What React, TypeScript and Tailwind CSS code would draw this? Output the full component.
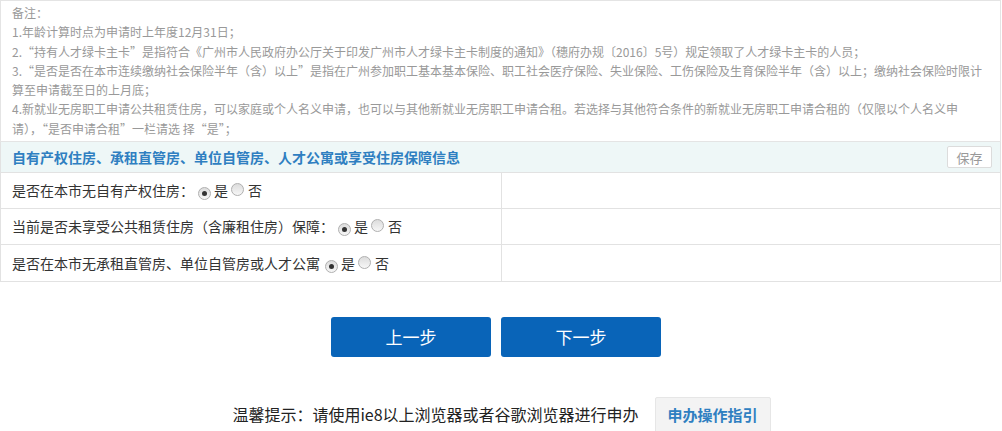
import React from "react";

const FONT = { fontFamily: '"Noto Sans CJK SC", "Noto Sans", sans-serif' };

function Radio({ checked }: { checked?: boolean }) {
  return (
    <span className="inline-flex w-[13px] h-[13px] rounded-full border border-[#b0b0b0] bg-gradient-to-b from-[#dcdcdc] to-[#f7f7f7] items-center justify-center shrink-0">
      {checked ? <span className="w-[5px] h-[5px] rounded-full bg-[#333]" /> : null}
    </span>
  );
}

function Row({ label, last, gap }: { label: string; last?: boolean; gap?: boolean }) {
  return (
    <div className={"grid grid-cols-[501px_1fr] h-[36px] " + (last ? "" : "border-b border-[#e2e2e2]")}>
      <div className="border-r border-[#e2e2e2] flex items-center pl-[11px] text-[14px] text-[#333]">
        <span>{label}</span>
        <span className={gap ? "ml-[5px] mr-[3px]" : "ml-[4px] mr-[3px]"}>
          <Radio checked />
        </span>
        <span>是</span>
        <span className="ml-[3px] mr-[4px]">
          <Radio />
        </span>
        <span>否</span>
      </div>
      <div />
    </div>
  );
}

export default function App() {
  const notes = [
    "备注：",
    "1.年龄计算时点为申请时上年度12月31日；",
    "2.“持有人才绿卡主卡”是指符合《广州市人民政府办公厅关于印发广州市人才绿卡主卡制度的通知》（穗府办规〔2016〕5号）规定领取了人才绿卡主卡的人员；",
    "3.“是否是否在本市连续缴纳社会保险半年（含）以上”是指在广州参加职工基本基本保险、职工社会医疗保险、失业保险、工伤保险及生育保险半年（含）以上；缴纳社会保险时限计",
    "算至申请截至日的上月底；",
    "4.新就业无房职工申请公共租赁住房，可以家庭或个人名义申请，也可以与其他新就业无房职工申请合租。若选择与其他符合条件的新就业无房职工申请合租的（仅限以个人名义申",
    "请），“是否申请合租”一栏请选 择“是”；",
  ];
  return (
    <div className="w-[1002px] h-[431px] bg-white overflow-hidden" style={FONT}>
      <div className="w-[1001px]">
        <div className="border border-[#e4e4e4] pl-[11px] pt-[2px] pb-[3px] text-[12px] leading-[19.3px] text-[#999]">
          {notes.map((n, i) => (
            <div key={i} className="whitespace-nowrap">
              {n}
            </div>
          ))}
        </div>
        <div className="border-x border-b border-[#e2e2e2]">
          <div className="h-[31px] bg-[#eef7f7] border-b border-[#e2e2e2] flex items-center justify-between pl-[11px] pr-[8px]">
            <span className="text-[14px] font-bold text-[#2f7fc1]">
              自有产权住房、承租直管房、单位自管房、人才公寓或享受住房保障信息
            </span>
            <button className="w-[45px] h-[22px] bg-white border border-[#dcdcdc] rounded-[2px] text-[13px] text-[#999] leading-none">
              保存
            </button>
          </div>
          <Row label="是否在本市无自有产权住房：" />
          <Row label="当前是否未享受公共租赁住房（含廉租住房）保障：" />
          <Row label="是否在本市无承租直管房、单位自管房或人才公寓" last gap />
        </div>
      </div>
      <div className="w-[992px] flex justify-center gap-[10px] mt-[35px]">
        <button className="w-[160px] h-[40px] rounded-[3px] bg-[#0964b8] text-white text-[17px]">上一步</button>
        <button className="w-[160px] h-[40px] rounded-[3px] bg-[#0964b8] text-white text-[17px]">下一步</button>
      </div>
      <div className="flex justify-center items-start mt-[40px] pl-[1px]">
        <span className="text-[16px] text-[#222] mt-[6px] leading-[22px]">温馨提示：请使用ie8以上浏览器或者谷歌浏览器进行申办</span>
        <span className="ml-[16px] w-[116px] h-[40px] bg-[#f3f3f3] border border-[#e6e6e6] rounded-[2px] flex justify-center pt-[6px] text-[15px] font-bold text-[#2f7fc1] leading-[22px]">
          申办操作指引
        </span>
      </div>
    </div>
  );
}
